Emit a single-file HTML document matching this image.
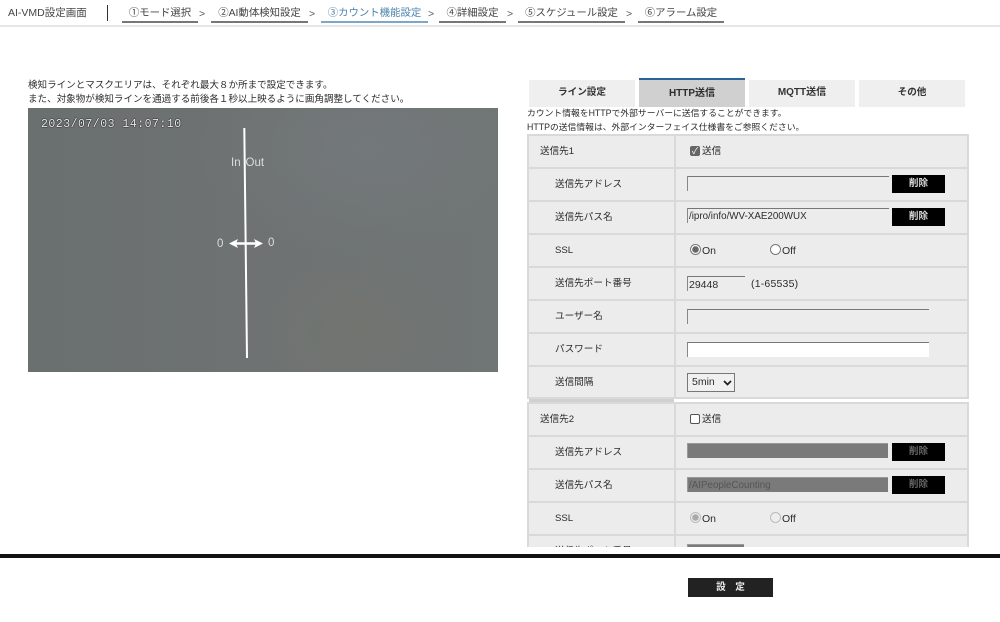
<!DOCTYPE html>
<html lang="ja"><head><meta charset="utf-8"><style>
html,body{margin:0;padding:0;background:#fff}
#p{position:relative;width:1000px;height:622px;overflow:hidden;font-family:"Liberation Sans","Noto Sans CJK JP",sans-serif;font-size:9.6px;color:#2c2c2c;background:#fff;filter:blur(.35px)}
#p div,#p span.a{position:absolute;white-space:nowrap}
.n{top:6px;height:15px;line-height:15px;border-bottom:2px solid #777;text-align:center;color:#444;font-size:10.4px;box-sizing:content-box}
.g{top:6px;line-height:16px;color:#555;font-size:10.5px}
.tab{top:80px;width:106px;height:27px;line-height:25px;background:#efefef;text-align:center;font-weight:bold;font-size:9.6px;color:#333}
.bg{left:527px;width:442px;background:#d9d9d9}
.c1{left:529px;width:145px;background:#ececec}
.c2{left:676px;width:291px;background:#ececec}
.l{left:540px;line-height:14px}
.l2{left:555px;line-height:14px}
.in{height:14px;border-top:1px solid #777;border-left:1px solid #888;background:#ececec;font-size:9.8px;line-height:16px;padding-left:1px;box-sizing:content-box}
.del{left:892px;width:53px;height:18px;line-height:18px;background:#000;color:#ddd;text-align:center;font-size:9.6px;font-weight:bold}
.dis{background:#7a7a7a;border-top:1px solid #999;border-left:1px solid #999;height:14px;color:#555;line-height:15px;padding-left:1px;font-size:9.8px}
.r{width:9px;height:9px;border-radius:50%;border:1px solid #777;background:#fff}
</style></head><body><div id="p">
<div style="left:0;top:25px;width:1000px;height:2px;background:#e6e6e6"></div>
<div style="left:8px;top:5px;line-height:16px;color:#444;font-size:10.5px">AI-VMD設定画面</div>
<div style="left:107px;top:5px;width:1px;height:16px;background:#333"></div>
<div class="n" style="left:122px;width:76px">①モード選択</div><div class="g" style="left:199px">&gt;</div>
<div class="n" style="left:211px;width:97px">②AI動体検知設定</div><div class="g" style="left:309px">&gt;</div>
<div class="n" style="left:321px;width:107px;color:#4d83ad;border-bottom-color:#7ba7cb">③カウント機能設定</div><div class="g" style="left:428px">&gt;</div>
<div class="n" style="left:439px;width:67px">④詳細設定</div><div class="g" style="left:507px">&gt;</div>
<div class="n" style="left:518px;width:107px">⑤スケジュール設定</div><div class="g" style="left:626px">&gt;</div>
<div class="n" style="left:638px;width:86px">⑥アラーム設定</div>

<div style="left:28px;top:79px;line-height:14px;font-size:9.55px">検知ラインとマスクエリアは、それぞれ最大８か所まで設定できます。</div>
<div style="left:28px;top:93px;line-height:14px;font-size:9.55px">また、対象物が検知ラインを通過する前後各１秒以上映るように画角調整してください。</div>

<div style="left:28px;top:108px;width:470px;height:264px;background:radial-gradient(ellipse 110px 80px at 330px 225px,#727470 0%,rgba(114,116,112,0) 100%),radial-gradient(ellipse 170px 110px at 340px 40px,#73787a 0%,rgba(115,120,122,0) 100%),linear-gradient(90deg,#6a6f6f,#6e7272 50%,#707575)"></div>
<div style="left:41px;top:118px;line-height:14px;font-family:'Liberation Mono',monospace;font-size:11.5px;letter-spacing:.5px;color:#eee;text-shadow:0 0 1px #000,0 0 1px #000">2023/07/03 14:07:10</div>
<svg style="position:absolute;left:0;top:0" width="1000" height="622"><line x1="244.3" y1="128" x2="247" y2="358" stroke="#fff" stroke-width="2"/><path d="M229 243.5L238 239L236.5 242.300H255.500L254 239L263 243.500L254 248L255.500 244.700H236.500L238 248Z" fill="#fff"/>
<text x="231" y="166" font-family="Liberation Sans" font-size="11.500" fill="#ddd">In</text><text x="245.500" y="166" font-family="Liberation Sans" font-size="11.500" fill="#ddd">Out</text><text x="217" y="247" font-family="Liberation Sans" font-size="11.500" fill="#ddd">0</text><text x="268" y="246" font-family="Liberation Sans" font-size="11.500" fill="#ddd">0</text></svg>

<div class="tab" style="left:529px">ライン設定</div>
<div class="tab" style="left:639px;top:78px;height:29px;line-height:31px;background:#d0d0d0;border-top:0"></div>
<div style="left:639px;top:78px;width:106px;height:2px;background:#2a6496"></div>
<div style="left:639px;top:87px;width:106px;text-align:center;font-weight:bold;line-height:14px;font-size:10px">HTTP送信</div>
<div class="tab" style="left:749px;font-size:10px">MQTT送信</div>
<div class="tab" style="left:859px">その他</div>
<div style="left:527px;top:107px;line-height:13px;font-size:8.8px">カウント情報をHTTPで外部サーバーに送信することができます。</div>
<div style="left:527px;top:121px;line-height:13px;font-size:8.8px">HTTPの送信情報は、外部インターフェイス仕様書をご参照ください。</div>

<div class="bg" style="top:134px;height:265px"></div>
<div style="left:529px;top:399px;width:145px;height:3px;background:#d0d0d0"></div>
<div class="c1" style="top:136px;height:31px"></div><div class="c2" style="top:136px;height:31px"></div>
<div class="c1" style="top:169px;height:31px"></div><div class="c2" style="top:169px;height:31px"></div>
<div class="c1" style="top:202px;height:31px"></div><div class="c2" style="top:202px;height:31px"></div>
<div class="c1" style="top:235px;height:31px"></div><div class="c2" style="top:235px;height:31px"></div>
<div class="c1" style="top:268px;height:31px"></div><div class="c2" style="top:268px;height:31px"></div>
<div class="c1" style="top:301px;height:31px"></div><div class="c2" style="top:301px;height:31px"></div>
<div class="c1" style="top:334px;height:31px"></div><div class="c2" style="top:334px;height:31px"></div>
<div class="c1" style="top:367px;height:30px"></div><div class="c2" style="top:367px;height:30px"></div>

<div class="l" style="top:145px">送信先1</div>
<div style="left:690px;top:146px;width:10px;height:10px;background:#666;border-radius:2px;color:#fff;font-size:9px;line-height:10px;text-align:center">✓</div>
<div style="left:702px;top:145px;line-height:14px">送信</div>
<div class="l2" style="top:178px">送信先アドレス</div>
<div class="in" style="left:687px;top:176px;width:200px"></div>
<div class="del" style="left:892px;top:175px">削除</div>
<div class="l2" style="top:211px">送信先パス名</div>
<div class="in" style="left:687px;top:208px;width:200px">/ipro/info/WV-XAE200WUX</div>
<div class="del" style="left:892px;top:208px">削除</div>
<div class="l2" style="top:244px">SSL</div>
<div class="r" style="left:690px;top:244px;background:radial-gradient(circle,#666 0 3px,#fff 3.5px)"></div>
<div style="left:702px;top:244px;line-height:14px;font-size:10.5px">On</div>
<div class="r" style="left:770px;top:244px"></div>
<div style="left:782px;top:244px;line-height:14px;font-size:10.5px">Off</div>
<div class="l2" style="top:277px">送信先ポート番号</div>
<div class="in" style="left:687px;top:276px;width:56px;font-size:10.5px">29448</div>
<div style="left:751px;top:277px;line-height:14px;font-size:10.5px;letter-spacing:.2px">(1-65535)</div>
<div class="l2" style="top:310px">ユーザー名</div>
<div class="in" style="left:687px;top:309px;width:240px"></div>
<div class="l2" style="top:343px">パスワード</div>
<div class="in" style="left:687px;top:342px;width:240px;background:#fff"></div>
<div class="l2" style="top:376px">送信間隔</div>
<div style="left:687px;top:373px;width:46px;height:17px;border:1px solid #777;background:#f0f0f0;line-height:17px;padding-left:0;box-sizing:content-box;font-size:10.5px"><span style="margin-left:4px">5min</span></div>
<svg style="position:absolute;left:723px;top:380px" width="9" height="6"><path d="M1 1L4.500 4.500L8 1" fill="none" stroke="#222" stroke-width="1.800"/></svg>

<div style="left:527px;top:402px;width:442px;height:145px;overflow:hidden">
<div class="bg" style="left:0;top:0;height:145px;width:442px"></div>
<div class="c1" style="left:2px;top:2px;height:31px"></div><div class="c2" style="left:149px;top:2px;height:31px"></div>
<div class="c1" style="left:2px;top:35px;height:31px"></div><div class="c2" style="left:149px;top:35px;height:31px"></div>
<div class="c1" style="left:2px;top:68px;height:31px"></div><div class="c2" style="left:149px;top:68px;height:31px"></div>
<div class="c1" style="left:2px;top:101px;height:31px"></div><div class="c2" style="left:149px;top:101px;height:31px"></div>
<div class="c1" style="left:2px;top:134px;height:31px"></div><div class="c2" style="left:149px;top:134px;height:31px"></div>
<div class="l" style="left:13px;top:11px">送信先2</div>
<div style="left:163px;top:12px;width:8px;height:8px;background:#fff;border:1px solid #555;border-radius:2px"></div>
<div style="left:175px;top:11px;line-height:14px">送信</div>
<div class="l2" style="left:28px;top:44px">送信先アドレス</div>
<div class="dis" style="left:160px;top:41px;width:199px"></div>
<div class="del" style="left:365px;top:41px;color:#666">削除</div>
<div class="l2" style="left:28px;top:77px">送信先パス名</div>
<div class="dis" style="left:160px;top:75px;width:199px">/AIPeopleCounting</div>
<div class="del" style="left:365px;top:74px;color:#666">削除</div>
<div class="l2" style="left:28px;top:110px">SSL</div>
<div class="r" style="left:163px;top:110px;border-color:#bbb;background:radial-gradient(circle,#aaa 0 3px,#eee 3.500px)"></div>
<div style="left:175px;top:110px;line-height:14px;font-size:10.5px">On</div>
<div class="r" style="left:243px;top:110px;border-color:#bbb;background:#eee"></div>
<div style="left:255px;top:110px;line-height:14px;font-size:10.5px">Off</div>
<div class="l2" style="left:28px;top:143px">送信先ポート番号</div>
<div class="dis" style="left:160px;top:142px;width:55px"></div>
</div>

<div style="left:0;top:554px;width:1000px;height:4px;background:#111"></div>
<div style="left:688px;top:578px;width:85px;height:19px;line-height:19px;background:#222;color:#eee;text-align:center;font-weight:bold;font-size:9.6px">設　定</div>
</div></body></html>
